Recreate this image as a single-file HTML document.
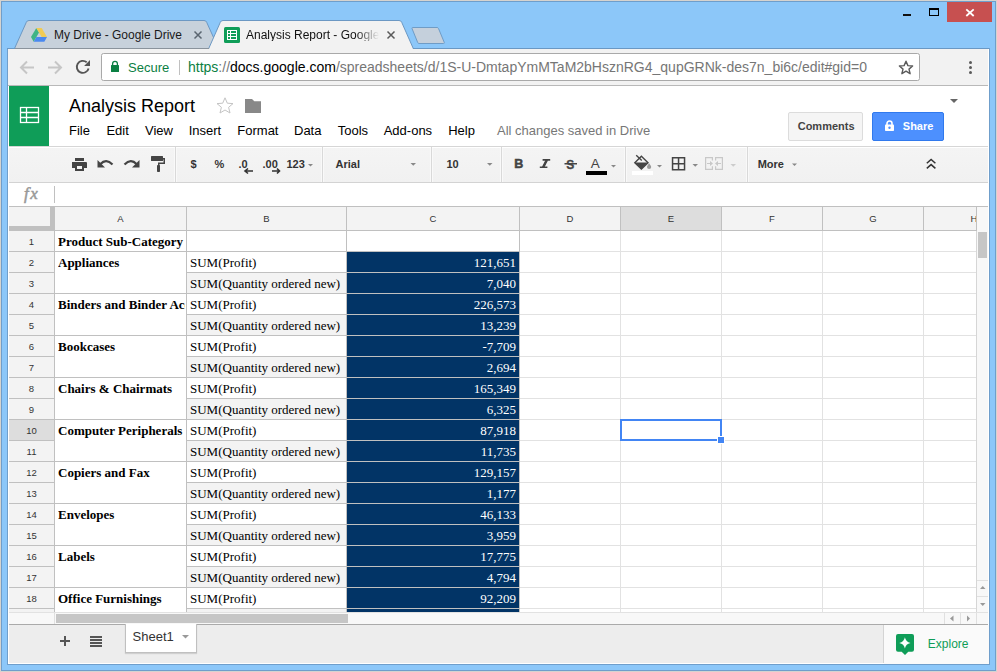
<!DOCTYPE html>
<html><head><meta charset="utf-8">
<style>
*{box-sizing:border-box;margin:0;padding:0}
html,body{width:997px;height:672px;overflow:hidden;background:#8cc7f9;font-family:"Liberation Sans",sans-serif;position:relative}
.a{position:absolute}
.t{position:absolute;white-space:pre}
</style></head><body>
<div class="a" style="left:0px;top:0px;width:997px;height:672px;background:#d6d3cf"></div>
<div class="a" style="left:1px;top:1px;width:995px;height:670px;background:#6f9ecb"></div>
<div class="a" style="left:2px;top:2px;width:993px;height:668px;background:#8cc7f9"></div>
<div class="a" style="left:7px;top:48px;width:983px;height:617px;background:#6f9ecb"></div>
<div class="a" style="left:8px;top:48px;width:981px;height:616px;background:#fff"></div>
<div class="a" style="left:947px;top:2px;width:45px;height:20px;background:#c75050"></div>
<svg class="a" style="left:947px;top:2px" width="45" height="20"><path d="M19.3,7.3 L26.7,14 M26.7,7.3 L19.3,14" stroke="#fff" stroke-width="1.8"/></svg>
<div class="a" style="left:903px;top:14px;width:8px;height:2px;background:#111"></div>
<div class="a" style="left:929px;top:8px;width:10px;height:8px;border:1px solid #000;border-top-width:2px"></div>
<svg class="a" style="left:0;top:0" width="997" height="50">
  <path d="M14.5,48.5 L26.3,22.3 Q27,20.5 29,20.5 L204,20.5 Q206,20.5 206.7,22.3 L218.5,48.5 Z" fill="#c7d1db" stroke="#6c98c3" stroke-width="1"/>
  <path d="M208.5,49 L220.3,22.3 Q221,20.5 223,20.5 L399,20.5 Q401,20.5 401.7,22.3 L413.5,49 Z" fill="#f2f2f2"/>
  <path d="M208.5,49 L220.3,22.3 Q221,20.5 223,20.5 L399,20.5 Q401,20.5 401.7,22.3 L413.5,49" fill="none" stroke="#6c98c3" stroke-width="1"/>
  <path d="M413,27.5 L437,27.5 Q438,27.5 438.5,28.5 L444.3,42.5 Q444.5,43.5 443.5,43.5 L419,43.5 Q418,43.5 417.7,42.5 L412,28.5 Q411.8,27.5 413,27.5 Z" fill="#c5d0dc" stroke="#6f9cc6" stroke-width="1"/>
  <path d="M31,37 L36.3,28 L41.7,28 L47,37 L44.3,42 L33.7,42 Z" fill="none"/>
  <path d="M36.3,28 L31,37 L33.7,41.8 L39,32.6 Z" fill="#40b486"/>
  <path d="M36.3,28 L41.7,28 L47,37 L41.7,37 Z" fill="#f1cb55"/>
  <path d="M33.7,41.8 L44.3,41.8 L47,37 L36.4,37 Z" fill="#4a89f0"/>
  <rect x="224" y="27" width="16" height="16" rx="1.5" fill="#0f9d58"/>
  <rect x="227" y="30" width="10" height="10" fill="#fff"/>
  <rect x="228" y="31" width="2" height="2" fill="#0f9d58"/><rect x="231" y="31" width="5" height="2" fill="#0f9d58"/>
  <rect x="228" y="34" width="2" height="2" fill="#0f9d58"/><rect x="231" y="34" width="5" height="2" fill="#0f9d58"/>
  <rect x="228" y="37" width="2" height="2" fill="#0f9d58"/><rect x="231" y="37" width="5" height="2" fill="#0f9d58"/>
  <path d="M194.5,31.5 L201.5,38.5 M201.5,31.5 L194.5,38.5" stroke="#5a6570" stroke-width="1.5"/>
  <path d="M387.5,31.5 L394.5,38.5 M394.5,31.5 L387.5,38.5" stroke="#5a5a5a" stroke-width="1.5"/>
</svg>
<div class="t" style="left:54px;top:28.84px;font-size:12px;line-height:12px;color:#1a1a1a">My Drive - Google Drive</div>
<div class="t" style="left:246px;top:28.84px;font-size:12px;line-height:12px;color:#111;width:135px;overflow:hidden;-webkit-mask-image:linear-gradient(90deg,#000 110px,transparent 133px)">Analysis Report - Google</div>
<div class="a" style="left:8px;top:49px;width:980px;height:36px;background:#f2f2f2"></div>
<div class="a" style="left:7px;top:48px;width:8px;height:1px;background:#6a98c4"></div>
<div class="a" style="left:15px;top:48px;width:194px;height:1px;background:#8a939c"></div>
<div class="a" style="left:413px;top:48px;width:576px;height:1px;background:#6a98c4"></div>
<div class="a" style="left:8px;top:85px;width:980px;height:1px;background:#b9b9b9"></div>
<svg class="a" style="left:0;top:48px" width="997" height="38">
  <path d="M34,19.5 L21,19.5 M27,13.5 L21,19.5 L27,25.5" stroke="#c6c6c6" stroke-width="2" fill="none"/>
  <path d="M48,19.5 L61,19.5 M55,13.5 L61,19.5 L55,25.5" stroke="#c6c6c6" stroke-width="2" fill="none"/>
  <path d="M88.6,20.4 A6,6 0 1 1 86.7,14.3" stroke="#555" stroke-width="1.9" fill="none"/>
  <path d="M90,12 L90,17.9 L84.1,17.9 Z" fill="#555"/>
</svg>
<div class="a" style="left:101px;top:53px;width:819px;height:28px;background:#fff;border:1px solid #a9a9a9;border-radius:2.5px"></div>
<svg class="a" style="left:108px;top:58px" width="14" height="16">
  <rect x="3" y="7" width="8" height="7" rx="0.5" fill="#0b8043"/>
  <path d="M4.6,7.5 V5.8 A2.4,2.4 0 0 1 9.4,5.8 V7.5" stroke="#0b8043" stroke-width="1.3" fill="none"/>
</svg>
<div class="t" style="left:128px;top:60.99px;font-size:13px;line-height:13px;color:#0b8043">Secure</div>
<div class="a" style="left:179px;top:60px;width:1px;height:15px;background:#c0c0c0"></div>
<div class="t" style="left:188px;top:60.15px;font-size:14px;line-height:14px;"><span style="color:#0b8043">https</span><span style="color:#767676">://</span><span style="color:#000">docs.google.com</span><span style="color:#767676">/spreadsheets/d/1S-U-DmtapYmMTaM2bHsznRG4_qupGRNk-des7n_bi6c/edit#gid=0</span></div>
<svg class="a" style="left:897px;top:59px" width="18" height="17">
  <path d="M9,2.2 L10.9,6.6 L15.6,7 L12,10.1 L13.1,14.7 L9,12.2 L4.9,14.7 L6,10.1 L2.4,7 L7.1,6.6 Z" fill="none" stroke="#5a5a5a" stroke-width="1.4" stroke-linejoin="round"/>
</svg>
<div class="a" style="left:969px;top:61px;width:3px;height:3px;background:#5a5a5a;border-radius:50%"></div>
<div class="a" style="left:969px;top:66px;width:3px;height:3px;background:#5a5a5a;border-radius:50%"></div>
<div class="a" style="left:969px;top:71px;width:3px;height:3px;background:#5a5a5a;border-radius:50%"></div>
<div class="a" style="left:9px;top:86px;width:40px;height:60px;background:#0f9d58"></div>
<svg class="a" style="left:19px;top:106px" width="21" height="18">
  <rect x="1.5" y="1.5" width="18" height="15" fill="none" stroke="#fff" stroke-width="1.3"/>
  <path d="M1.5,6.5 H19.5 M1.5,11.5 H19.5 M7.5,1.5 V16.5" stroke="#fff" stroke-width="1.3"/>
</svg>
<div class="t" style="left:69px;top:96.76px;font-size:18px;line-height:18px;color:#000">Analysis Report</div>
<svg class="a" style="left:215px;top:96px" width="20" height="18">
  <path d="M10,1.8 L12.3,7.2 L18,7.6 L13.6,11.3 L15,17 L10,14 L5,17 L6.4,11.3 L2,7.6 L7.7,7.2 Z" fill="none" stroke="#c4c4c4" stroke-width="1"/>
</svg>
<svg class="a" style="left:245px;top:99px" width="17" height="14">
  <path d="M0,0 H7 L9.3,2.3 H16 V14 H0 Z" fill="#888"/>
</svg>
<div class="t" style="left:69px;top:123.99px;font-size:13px;line-height:13px;color:#000">File</div>
<div class="t" style="left:106.4px;top:123.99px;font-size:13px;line-height:13px;color:#000">Edit</div>
<div class="t" style="left:145px;top:123.99px;font-size:13px;line-height:13px;color:#000">View</div>
<div class="t" style="left:188.7px;top:123.99px;font-size:13px;line-height:13px;color:#000">Insert</div>
<div class="t" style="left:237.3px;top:123.99px;font-size:13px;line-height:13px;color:#000">Format</div>
<div class="t" style="left:294px;top:123.99px;font-size:13px;line-height:13px;color:#000">Data</div>
<div class="t" style="left:337.7px;top:123.99px;font-size:13px;line-height:13px;color:#000">Tools</div>
<div class="t" style="left:383.7px;top:123.99px;font-size:13px;line-height:13px;color:#000">Add-ons</div>
<div class="t" style="left:448.2px;top:123.99px;font-size:13px;line-height:13px;color:#000">Help</div>
<div class="t" style="left:497px;top:123.99px;font-size:13px;line-height:13px;color:#777">All changes saved in Drive</div>
<svg class="a" style="left:950px;top:99px" width="9" height="5"><path d="M0,0 H8 L4,4 Z" fill="#666"/></svg>
<div class="a" style="left:788px;top:112px;width:75px;height:29px;background:#f5f5f5;border:1px solid #dcdcdc;border-radius:2px"></div>
<div class="t" style="left:797.7px;top:120.69px;font-size:11px;line-height:11px;color:#444;font-weight:bold">Comments</div>
<div class="a" style="left:872px;top:112px;width:72px;height:29px;background:#4d90fe;border:1px solid #3079ed;border-radius:2px"></div>
<svg class="a" style="left:885px;top:119px" width="10" height="13">
  <rect x="0" y="5.5" width="9" height="6.5" rx="0.8" fill="#fff"/>
  <path d="M2,6 V4.5 A2.5,2.5 0 0 1 7,4.5 V6" stroke="#fff" stroke-width="1.6" fill="none"/>
  <circle cx="4.5" cy="8.8" r="1.2" fill="#4d90fe"/>
</svg>
<div class="t" style="left:902.8px;top:120.69px;font-size:11px;line-height:11px;color:#fff;font-weight:bold">Share</div>
<div class="a" style="left:9px;top:146px;width:979px;height:1px;background:#d6d6d6"></div>
<div class="a" style="left:9px;top:147px;width:979px;height:1px;background:#fff"></div>
<div class="a" style="left:9px;top:148px;width:979px;height:34px;background:linear-gradient(#f4f4f4,#f1f1f1)"></div>
<div class="a" style="left:9px;top:182px;width:979px;height:1px;background:#d3d3d3"></div>
<div class="a" style="left:174px;top:148px;width:3px;height:34px;background:#f9f9f9"></div>
<div class="a" style="left:175px;top:147px;width:1px;height:35px;background:#d9d9d9"></div>
<div class="a" style="left:321px;top:148px;width:3px;height:34px;background:#f9f9f9"></div>
<div class="a" style="left:322px;top:147px;width:1px;height:35px;background:#d9d9d9"></div>
<div class="a" style="left:430px;top:148px;width:3px;height:34px;background:#f9f9f9"></div>
<div class="a" style="left:431px;top:147px;width:1px;height:35px;background:#d9d9d9"></div>
<div class="a" style="left:500px;top:148px;width:3px;height:34px;background:#f9f9f9"></div>
<div class="a" style="left:501px;top:147px;width:1px;height:35px;background:#d9d9d9"></div>
<div class="a" style="left:624px;top:148px;width:3px;height:34px;background:#f9f9f9"></div>
<div class="a" style="left:625px;top:147px;width:1px;height:35px;background:#d9d9d9"></div>
<div class="a" style="left:746px;top:148px;width:3px;height:34px;background:#f9f9f9"></div>
<div class="a" style="left:747px;top:147px;width:1px;height:35px;background:#d9d9d9"></div>
<svg class="a" style="left:0;top:147px" width="997" height="35">
  <!-- print -->
  <g fill="#444">
    <rect x="75" y="11" width="9" height="3"/>
    <path d="M72,15 H86 Q87,15 87,16 V21 H84 V24 H75 V21 H72 Z"/>
    <rect x="77" y="19" width="5" height="3" fill="#f3f3f3"/>
  </g>
  <!-- undo -->
  <path d="M100.5,17 Q106,11 112.5,17.5" stroke="#444" stroke-width="2.2" fill="none"/>
  <path d="M97.5,13 L97.5,20.5 L105,20.5 Z" fill="#444"/>
  <!-- redo -->
  <path d="M136.5,17 Q131,11 124.5,17.5" stroke="#444" stroke-width="2.2" fill="none"/>
  <path d="M139.5,13 L139.5,20.5 L132,20.5 Z" fill="#444"/>
  <!-- paint format -->
  <g fill="#444">
    <rect x="151" y="9" width="12" height="5" rx="0.5"/>
    <path d="M163,11 H165 V17 H159.5 V19 H158 V15.5 H163.5 V12.5 H163 Z"/>
    <rect x="157" y="18" width="3" height="7" rx="0.8"/>
  </g>
</svg>
<div class="t" style="left:190.5px;top:158.69px;font-size:11px;line-height:11px;color:#333;font-weight:bold">$</div>
<div class="t" style="left:214.5px;top:158.69px;font-size:11px;line-height:11px;color:#333;font-weight:bold">%</div>
<div class="t" style="left:238.5px;top:158.69px;font-size:11px;line-height:11px;color:#333;font-weight:bold">.0</div>
<div class="t" style="left:262.5px;top:158.69px;font-size:11px;line-height:11px;color:#333;font-weight:bold">.00</div>
<div class="t" style="left:286.5px;top:158.69px;font-size:11px;line-height:11px;color:#333;font-weight:bold">123</div>
<div class="t" style="left:335.6px;top:158.69px;font-size:11px;line-height:11px;color:#333;font-weight:bold">Arial</div>
<div class="t" style="left:446.4px;top:158.69px;font-size:11px;line-height:11px;color:#333;font-weight:bold">10</div>
<div class="t" style="left:757.7px;top:158.69px;font-size:11px;line-height:11px;color:#333;font-weight:bold">More</div>
<svg class="a" style="left:0;top:147px" width="997" height="35">
  <path d="M245,24 H253 M248,21.5 L245,24 L248,26.5" stroke="#333" stroke-width="1.6" fill="none"/>
  <path d="M272,24 H279.5 M277,21.5 L279.5,24 L277,26.5" stroke="#333" stroke-width="1.6" fill="none"/>
  <g fill="#888">
    <path d="M308,17 h5 l-2.5,2.5 z"/>
    <path d="M410.5,16 h5.5 l-2.75,2.75 z"/>
    <path d="M487,16 h5.5 l-2.75,2.75 z"/>
    <path d="M611,18 h5 l-2.5,2.5 z"/>
    <path d="M657,18 h5 l-2.5,2.5 z"/>
    <path d="M692.5,17 h5.5 l-2.75,2.75 z"/>
    <path d="M792,16.5 h5 l-2.5,2.5 z"/>
  </g>
  <path d="M730.5,17 h5.5 l-2.75,2.75 z" fill="#ccc"/>
  <!-- B -->
  <text x="514.3" y="21" font-family="Liberation Sans" font-weight="bold" font-size="12.5" fill="#444" stroke="#444" stroke-width="0.5">B</text>
  <!-- I -->
  <path d="M542.6,12.9 H550.2 M539.8,20.3 H547.4 M546.9,12.9 L543.1,20.3" stroke="#444" stroke-width="1.6" fill="none"/>
  <path d="M546.9,12.9 L543.1,20.3" stroke="#444" stroke-width="2.4" fill="none"/>
  <!-- S strike -->
  <text x="566.3" y="21.8" font-family="Liberation Sans" font-weight="bold" font-size="12" fill="#444" stroke="#444" stroke-width="0.3">S</text>
  <rect x="564.5" y="16" width="12.5" height="1.5" fill="#444"/>
  <!-- A text color -->
  <text x="590.8" y="21" font-family="Liberation Sans" font-size="13.5" fill="#444">A</text>
  <rect x="586" y="24" width="21" height="4" fill="#000"/>
  <!-- fill -->
  <path d="M634.8,15.8 L641.4,9.2 L648,15.8 L641.4,22 Z" fill="none" stroke="#444" stroke-width="1.4" stroke-linejoin="miter"/>
  <path d="M634.8,15.6 L648,15.6 L641.4,22 Z" fill="#444"/>
  <path d="M636.2,8.3 L641.8,13.5" stroke="#444" stroke-width="1.4"/>
  <path d="M649.1,16.2 Q651.2,19 651.2,20 A2.1,2.1 0 0 1 647,20 Q647,19 649.1,16.2 Z" fill="#999"/>
  <rect x="632" y="24" width="21" height="4" fill="#fff"/>
  <!-- borders -->
  <g transform="translate(669.55,7.75) scale(0.75)"><path d="M3 3v18h18V3H3zm8 16H5v-6h6v6zm0-8H5V5h6v6zm8 8h-6v-6h6v6zm0-8h-6V5h6v6z" fill="#444"/></g>
  <!-- merge disabled -->
  <g stroke="#c8c8c8" stroke-width="1.2" fill="none">
    <path d="M712.4,13.6 V10.6 H705.6 V22.4 H712.4 V19.2"/>
    <path d="M715.6,13.6 V10.6 H722.4 V22.4 H715.6 V19.2"/>
    <path d="M707,16.5 H710.5 M721,16.5 H717.5"/>
  </g>
  <path d="M710,14 L713,16.5 L710,19 Z M718,14 L715,16.5 L718,19 Z" fill="#c8c8c8"/>
  <!-- collapse -->
  <path d="M926.8,16.2 L931.1,12.4 L935.4,16.2 M926.8,21.4 L931.1,17.6 L935.4,21.4" stroke="#333" stroke-width="1.5" fill="none"/>
</svg>
<div class="t" style="left:24px;top:184.76px;font-size:17px;line-height:17px;font-family:'Liberation Serif',serif;color:#999;font-style:italic;-webkit-text-stroke:0.5px #999;letter-spacing:1.5px">f<span style="letter-spacing:0">x</span></div>
<div class="a" style="left:54px;top:186px;width:1px;height:17px;background:#c0c0c0"></div>
<div class="a" style="left:9px;top:206px;width:979px;height:1px;background:#c0c0c0"></div>
<div class="a" style="left:9px;top:207px;width:968px;height:23px;background:#f3f3f3"></div>
<div class="a" style="left:621px;top:207px;width:100px;height:23px;background:#dddddd"></div>
<div class="a" style="left:9px;top:230px;width:968px;height:1px;background:#c0c0c0"></div>
<div class="a" style="left:977px;top:230px;width:11px;height:1px;background:#dcdcdc"></div>
<div class="a" style="left:9px;top:231px;width:45px;height:381px;background:#f3f3f3"></div>
<div class="a" style="left:9px;top:420px;width:45px;height:20px;background:#dddddd"></div>
<div class="a" style="left:50px;top:207px;width:4px;height:24px;background:#c0c0c0"></div>
<div class="a" style="left:9px;top:226px;width:45px;height:4px;background:#c0c0c0"></div>
<div class="a" style="left:977px;top:207px;width:11px;height:406px;background:#f8f8f8"></div>
<div class="a" style="left:520px;top:251px;width:457px;height:1px;background:#e2e2e2"></div>
<div class="a" style="left:520px;top:272px;width:457px;height:1px;background:#e2e2e2"></div>
<div class="a" style="left:520px;top:293px;width:457px;height:1px;background:#e2e2e2"></div>
<div class="a" style="left:520px;top:314px;width:457px;height:1px;background:#e2e2e2"></div>
<div class="a" style="left:520px;top:335px;width:457px;height:1px;background:#e2e2e2"></div>
<div class="a" style="left:520px;top:356px;width:457px;height:1px;background:#e2e2e2"></div>
<div class="a" style="left:520px;top:377px;width:457px;height:1px;background:#e2e2e2"></div>
<div class="a" style="left:520px;top:398px;width:457px;height:1px;background:#e2e2e2"></div>
<div class="a" style="left:520px;top:419px;width:457px;height:1px;background:#e2e2e2"></div>
<div class="a" style="left:520px;top:440px;width:457px;height:1px;background:#e2e2e2"></div>
<div class="a" style="left:520px;top:461px;width:457px;height:1px;background:#e2e2e2"></div>
<div class="a" style="left:520px;top:482px;width:457px;height:1px;background:#e2e2e2"></div>
<div class="a" style="left:520px;top:503px;width:457px;height:1px;background:#e2e2e2"></div>
<div class="a" style="left:520px;top:524px;width:457px;height:1px;background:#e2e2e2"></div>
<div class="a" style="left:520px;top:545px;width:457px;height:1px;background:#e2e2e2"></div>
<div class="a" style="left:520px;top:566px;width:457px;height:1px;background:#e2e2e2"></div>
<div class="a" style="left:520px;top:587px;width:457px;height:1px;background:#e2e2e2"></div>
<div class="a" style="left:520px;top:608px;width:457px;height:1px;background:#e2e2e2"></div>
<div class="a" style="left:186px;top:231px;width:1px;height:381px;background:#e2e2e2"></div>
<div class="a" style="left:346px;top:231px;width:1px;height:381px;background:#e2e2e2"></div>
<div class="a" style="left:519px;top:231px;width:1px;height:381px;background:#e2e2e2"></div>
<div class="a" style="left:620px;top:231px;width:1px;height:381px;background:#e2e2e2"></div>
<div class="a" style="left:721px;top:231px;width:1px;height:381px;background:#e2e2e2"></div>
<div class="a" style="left:822px;top:231px;width:1px;height:381px;background:#e2e2e2"></div>
<div class="a" style="left:923px;top:231px;width:1px;height:381px;background:#e2e2e2"></div>
<div class="a" style="left:54px;top:206px;width:1px;height:406px;background:#c0c0c0"></div>
<div class="a" style="left:976px;top:207px;width:1px;height:24px;background:#c0c0c0"></div>
<div class="a" style="left:976px;top:231px;width:1px;height:382px;background:#d6d6d6"></div>
<div class="a" style="left:186px;top:207px;width:1px;height:23px;background:#c0c0c0"></div>
<div class="a" style="left:346px;top:207px;width:1px;height:23px;background:#c0c0c0"></div>
<div class="a" style="left:519px;top:207px;width:1px;height:23px;background:#c0c0c0"></div>
<div class="a" style="left:620px;top:207px;width:1px;height:23px;background:#c0c0c0"></div>
<div class="a" style="left:721px;top:207px;width:1px;height:23px;background:#c0c0c0"></div>
<div class="a" style="left:822px;top:207px;width:1px;height:23px;background:#c0c0c0"></div>
<div class="a" style="left:923px;top:207px;width:1px;height:23px;background:#c0c0c0"></div>
<div class="t" style="left:20.5px;width:200px;text-align:center;top:213.96px;font-size:9.5px;line-height:9.5px;color:#333">A</div>
<div class="t" style="left:166.5px;width:200px;text-align:center;top:213.96px;font-size:9.5px;line-height:9.5px;color:#333">B</div>
<div class="t" style="left:333.0px;width:200px;text-align:center;top:213.96px;font-size:9.5px;line-height:9.5px;color:#333">C</div>
<div class="t" style="left:470.0px;width:200px;text-align:center;top:213.96px;font-size:9.5px;line-height:9.5px;color:#333">D</div>
<div class="t" style="left:571.0px;width:200px;text-align:center;top:213.96px;font-size:9.5px;line-height:9.5px;color:#333">E</div>
<div class="t" style="left:672.0px;width:200px;text-align:center;top:213.96px;font-size:9.5px;line-height:9.5px;color:#333">F</div>
<div class="t" style="left:773.0px;width:200px;text-align:center;top:213.96px;font-size:9.5px;line-height:9.5px;color:#333">G</div>
<div class="a" style="left:924px;top:207px;width:52px;height:23px;overflow:hidden">
<div class="t" style="left:-50px;width:200px;text-align:center;top:6.96px;font-size:9.5px;line-height:9.5px;color:#333">H</div>
</div>
<div class="a" style="left:9px;top:251px;width:45px;height:1px;background:#c0c0c0"></div>
<div class="t" style="left:-68.5px;width:200px;text-align:center;top:237.36px;font-size:9.5px;line-height:9.5px;color:#333">1</div>
<div class="a" style="left:9px;top:272px;width:45px;height:1px;background:#c0c0c0"></div>
<div class="t" style="left:-68.5px;width:200px;text-align:center;top:258.36px;font-size:9.5px;line-height:9.5px;color:#333">2</div>
<div class="a" style="left:9px;top:293px;width:45px;height:1px;background:#c0c0c0"></div>
<div class="t" style="left:-68.5px;width:200px;text-align:center;top:279.36px;font-size:9.5px;line-height:9.5px;color:#333">3</div>
<div class="a" style="left:9px;top:314px;width:45px;height:1px;background:#c0c0c0"></div>
<div class="t" style="left:-68.5px;width:200px;text-align:center;top:300.36px;font-size:9.5px;line-height:9.5px;color:#333">4</div>
<div class="a" style="left:9px;top:335px;width:45px;height:1px;background:#c0c0c0"></div>
<div class="t" style="left:-68.5px;width:200px;text-align:center;top:321.36px;font-size:9.5px;line-height:9.5px;color:#333">5</div>
<div class="a" style="left:9px;top:356px;width:45px;height:1px;background:#c0c0c0"></div>
<div class="t" style="left:-68.5px;width:200px;text-align:center;top:342.36px;font-size:9.5px;line-height:9.5px;color:#333">6</div>
<div class="a" style="left:9px;top:377px;width:45px;height:1px;background:#c0c0c0"></div>
<div class="t" style="left:-68.5px;width:200px;text-align:center;top:363.36px;font-size:9.5px;line-height:9.5px;color:#333">7</div>
<div class="a" style="left:9px;top:398px;width:45px;height:1px;background:#c0c0c0"></div>
<div class="t" style="left:-68.5px;width:200px;text-align:center;top:384.36px;font-size:9.5px;line-height:9.5px;color:#333">8</div>
<div class="a" style="left:9px;top:419px;width:45px;height:1px;background:#c0c0c0"></div>
<div class="t" style="left:-68.5px;width:200px;text-align:center;top:405.36px;font-size:9.5px;line-height:9.5px;color:#333">9</div>
<div class="a" style="left:9px;top:440px;width:45px;height:1px;background:#c0c0c0"></div>
<div class="t" style="left:-68.5px;width:200px;text-align:center;top:426.36px;font-size:9.5px;line-height:9.5px;color:#333">10</div>
<div class="a" style="left:9px;top:461px;width:45px;height:1px;background:#c0c0c0"></div>
<div class="t" style="left:-68.5px;width:200px;text-align:center;top:447.36px;font-size:9.5px;line-height:9.5px;color:#333">11</div>
<div class="a" style="left:9px;top:482px;width:45px;height:1px;background:#c0c0c0"></div>
<div class="t" style="left:-68.5px;width:200px;text-align:center;top:468.36px;font-size:9.5px;line-height:9.5px;color:#333">12</div>
<div class="a" style="left:9px;top:503px;width:45px;height:1px;background:#c0c0c0"></div>
<div class="t" style="left:-68.5px;width:200px;text-align:center;top:489.36px;font-size:9.5px;line-height:9.5px;color:#333">13</div>
<div class="a" style="left:9px;top:524px;width:45px;height:1px;background:#c0c0c0"></div>
<div class="t" style="left:-68.5px;width:200px;text-align:center;top:510.36px;font-size:9.5px;line-height:9.5px;color:#333">14</div>
<div class="a" style="left:9px;top:545px;width:45px;height:1px;background:#c0c0c0"></div>
<div class="t" style="left:-68.5px;width:200px;text-align:center;top:531.36px;font-size:9.5px;line-height:9.5px;color:#333">15</div>
<div class="a" style="left:9px;top:566px;width:45px;height:1px;background:#c0c0c0"></div>
<div class="t" style="left:-68.5px;width:200px;text-align:center;top:552.36px;font-size:9.5px;line-height:9.5px;color:#333">16</div>
<div class="a" style="left:9px;top:587px;width:45px;height:1px;background:#c0c0c0"></div>
<div class="t" style="left:-68.5px;width:200px;text-align:center;top:573.36px;font-size:9.5px;line-height:9.5px;color:#333">17</div>
<div class="a" style="left:9px;top:608px;width:45px;height:1px;background:#c0c0c0"></div>
<div class="t" style="left:-68.5px;width:200px;text-align:center;top:594.36px;font-size:9.5px;line-height:9.5px;color:#333">18</div>
<div class="a" style="left:347px;top:252px;width:172px;height:20px;background:#023466"></div>
<div class="a" style="left:347px;top:273px;width:172px;height:20px;background:#023466"></div>
<div class="a" style="left:187px;top:273px;width:159px;height:20px;background:#f3f3f3"></div>
<div class="a" style="left:347px;top:294px;width:172px;height:20px;background:#023466"></div>
<div class="a" style="left:347px;top:315px;width:172px;height:20px;background:#023466"></div>
<div class="a" style="left:187px;top:315px;width:159px;height:20px;background:#f3f3f3"></div>
<div class="a" style="left:347px;top:336px;width:172px;height:20px;background:#023466"></div>
<div class="a" style="left:347px;top:357px;width:172px;height:20px;background:#023466"></div>
<div class="a" style="left:187px;top:357px;width:159px;height:20px;background:#f3f3f3"></div>
<div class="a" style="left:347px;top:378px;width:172px;height:20px;background:#023466"></div>
<div class="a" style="left:347px;top:399px;width:172px;height:20px;background:#023466"></div>
<div class="a" style="left:187px;top:399px;width:159px;height:20px;background:#f3f3f3"></div>
<div class="a" style="left:347px;top:420px;width:172px;height:20px;background:#023466"></div>
<div class="a" style="left:347px;top:441px;width:172px;height:20px;background:#023466"></div>
<div class="a" style="left:187px;top:441px;width:159px;height:20px;background:#f3f3f3"></div>
<div class="a" style="left:347px;top:462px;width:172px;height:20px;background:#023466"></div>
<div class="a" style="left:347px;top:483px;width:172px;height:20px;background:#023466"></div>
<div class="a" style="left:187px;top:483px;width:159px;height:20px;background:#f3f3f3"></div>
<div class="a" style="left:347px;top:504px;width:172px;height:20px;background:#023466"></div>
<div class="a" style="left:347px;top:525px;width:172px;height:20px;background:#023466"></div>
<div class="a" style="left:187px;top:525px;width:159px;height:20px;background:#f3f3f3"></div>
<div class="a" style="left:347px;top:546px;width:172px;height:20px;background:#023466"></div>
<div class="a" style="left:347px;top:567px;width:172px;height:20px;background:#023466"></div>
<div class="a" style="left:187px;top:567px;width:159px;height:20px;background:#f3f3f3"></div>
<div class="a" style="left:347px;top:588px;width:172px;height:20px;background:#023466"></div>
<div class="a" style="left:347px;top:609px;width:172px;height:3px;background:#023466"></div>
<div class="a" style="left:187px;top:609px;width:159px;height:3px;background:#f3f3f3"></div>
<div class="a" style="left:186px;top:251px;width:334px;height:1px;background:#c0c0c0"></div>
<div class="a" style="left:54px;top:251px;width:133px;height:1px;background:#c0c0c0"></div>
<div class="a" style="left:186px;top:272px;width:334px;height:1px;background:#c0c0c0"></div>
<div class="a" style="left:186px;top:293px;width:334px;height:1px;background:#c0c0c0"></div>
<div class="a" style="left:54px;top:293px;width:133px;height:1px;background:#c0c0c0"></div>
<div class="a" style="left:186px;top:314px;width:334px;height:1px;background:#c0c0c0"></div>
<div class="a" style="left:186px;top:335px;width:334px;height:1px;background:#c0c0c0"></div>
<div class="a" style="left:54px;top:335px;width:133px;height:1px;background:#c0c0c0"></div>
<div class="a" style="left:186px;top:356px;width:334px;height:1px;background:#c0c0c0"></div>
<div class="a" style="left:186px;top:377px;width:334px;height:1px;background:#c0c0c0"></div>
<div class="a" style="left:54px;top:377px;width:133px;height:1px;background:#c0c0c0"></div>
<div class="a" style="left:186px;top:398px;width:334px;height:1px;background:#c0c0c0"></div>
<div class="a" style="left:186px;top:419px;width:334px;height:1px;background:#c0c0c0"></div>
<div class="a" style="left:54px;top:419px;width:133px;height:1px;background:#c0c0c0"></div>
<div class="a" style="left:186px;top:440px;width:334px;height:1px;background:#c0c0c0"></div>
<div class="a" style="left:186px;top:461px;width:334px;height:1px;background:#c0c0c0"></div>
<div class="a" style="left:54px;top:461px;width:133px;height:1px;background:#c0c0c0"></div>
<div class="a" style="left:186px;top:482px;width:334px;height:1px;background:#c0c0c0"></div>
<div class="a" style="left:186px;top:503px;width:334px;height:1px;background:#c0c0c0"></div>
<div class="a" style="left:54px;top:503px;width:133px;height:1px;background:#c0c0c0"></div>
<div class="a" style="left:186px;top:524px;width:334px;height:1px;background:#c0c0c0"></div>
<div class="a" style="left:186px;top:545px;width:334px;height:1px;background:#c0c0c0"></div>
<div class="a" style="left:54px;top:545px;width:133px;height:1px;background:#c0c0c0"></div>
<div class="a" style="left:186px;top:566px;width:334px;height:1px;background:#c0c0c0"></div>
<div class="a" style="left:186px;top:587px;width:334px;height:1px;background:#c0c0c0"></div>
<div class="a" style="left:54px;top:587px;width:133px;height:1px;background:#c0c0c0"></div>
<div class="a" style="left:186px;top:608px;width:334px;height:1px;background:#c0c0c0"></div>
<div class="a" style="left:186px;top:231px;width:1px;height:381px;background:#c0c0c0"></div>
<div class="a" style="left:346px;top:231px;width:1px;height:381px;background:#c0c0c0"></div>
<div class="a" style="left:519px;top:231px;width:1px;height:381px;background:#c0c0c0"></div>
<div class="t" style="left:58px;width:127px;overflow:hidden;padding:4px 0 6px;top:231.11px;font-size:13px;line-height:13px;font-family:'Liberation Serif',serif;color:#000;font-weight:bold;white-space:nowrap">Product Sub-Category</div>
<div class="t" style="left:58px;width:127px;overflow:hidden;padding:4px 0 6px;top:252.11px;font-size:13px;line-height:13px;font-family:'Liberation Serif',serif;color:#000;font-weight:bold;white-space:nowrap">Appliances</div>
<div class="t" style="left:190px;top:256.11px;font-size:13px;line-height:13px;font-family:'Liberation Serif',serif;color:#000;white-space:nowrap">SUM(Profit)</div>
<div class="t" style="right:481px;text-align:right;top:256.11px;font-size:13px;line-height:13px;font-family:'Liberation Serif',serif;color:#fff">121,651</div>
<div class="t" style="left:190px;top:277.11px;font-size:13px;line-height:13px;font-family:'Liberation Serif',serif;color:#000;white-space:nowrap">SUM(Quantity ordered new)</div>
<div class="t" style="right:481px;text-align:right;top:277.11px;font-size:13px;line-height:13px;font-family:'Liberation Serif',serif;color:#fff">7,040</div>
<div class="t" style="left:58px;width:127px;overflow:hidden;padding:4px 0 6px;top:294.11px;font-size:13px;line-height:13px;font-family:'Liberation Serif',serif;color:#000;font-weight:bold;white-space:nowrap">Binders and Binder Accessories</div>
<div class="t" style="left:190px;top:298.11px;font-size:13px;line-height:13px;font-family:'Liberation Serif',serif;color:#000;white-space:nowrap">SUM(Profit)</div>
<div class="t" style="right:481px;text-align:right;top:298.11px;font-size:13px;line-height:13px;font-family:'Liberation Serif',serif;color:#fff">226,573</div>
<div class="t" style="left:190px;top:319.11px;font-size:13px;line-height:13px;font-family:'Liberation Serif',serif;color:#000;white-space:nowrap">SUM(Quantity ordered new)</div>
<div class="t" style="right:481px;text-align:right;top:319.11px;font-size:13px;line-height:13px;font-family:'Liberation Serif',serif;color:#fff">13,239</div>
<div class="t" style="left:58px;width:127px;overflow:hidden;padding:4px 0 6px;top:336.11px;font-size:13px;line-height:13px;font-family:'Liberation Serif',serif;color:#000;font-weight:bold;white-space:nowrap">Bookcases</div>
<div class="t" style="left:190px;top:340.11px;font-size:13px;line-height:13px;font-family:'Liberation Serif',serif;color:#000;white-space:nowrap">SUM(Profit)</div>
<div class="t" style="right:481px;text-align:right;top:340.11px;font-size:13px;line-height:13px;font-family:'Liberation Serif',serif;color:#fff">-7,709</div>
<div class="t" style="left:190px;top:361.11px;font-size:13px;line-height:13px;font-family:'Liberation Serif',serif;color:#000;white-space:nowrap">SUM(Quantity ordered new)</div>
<div class="t" style="right:481px;text-align:right;top:361.11px;font-size:13px;line-height:13px;font-family:'Liberation Serif',serif;color:#fff">2,694</div>
<div class="t" style="left:58px;width:127px;overflow:hidden;padding:4px 0 6px;top:378.11px;font-size:13px;line-height:13px;font-family:'Liberation Serif',serif;color:#000;font-weight:bold;white-space:nowrap">Chairs &amp; Chairmats</div>
<div class="t" style="left:190px;top:382.11px;font-size:13px;line-height:13px;font-family:'Liberation Serif',serif;color:#000;white-space:nowrap">SUM(Profit)</div>
<div class="t" style="right:481px;text-align:right;top:382.11px;font-size:13px;line-height:13px;font-family:'Liberation Serif',serif;color:#fff">165,349</div>
<div class="t" style="left:190px;top:403.11px;font-size:13px;line-height:13px;font-family:'Liberation Serif',serif;color:#000;white-space:nowrap">SUM(Quantity ordered new)</div>
<div class="t" style="right:481px;text-align:right;top:403.11px;font-size:13px;line-height:13px;font-family:'Liberation Serif',serif;color:#fff">6,325</div>
<div class="t" style="left:58px;width:127px;overflow:hidden;padding:4px 0 6px;top:420.11px;font-size:13px;line-height:13px;font-family:'Liberation Serif',serif;color:#000;font-weight:bold;white-space:nowrap">Computer Peripherals</div>
<div class="t" style="left:190px;top:424.11px;font-size:13px;line-height:13px;font-family:'Liberation Serif',serif;color:#000;white-space:nowrap">SUM(Profit)</div>
<div class="t" style="right:481px;text-align:right;top:424.11px;font-size:13px;line-height:13px;font-family:'Liberation Serif',serif;color:#fff">87,918</div>
<div class="t" style="left:190px;top:445.11px;font-size:13px;line-height:13px;font-family:'Liberation Serif',serif;color:#000;white-space:nowrap">SUM(Quantity ordered new)</div>
<div class="t" style="right:481px;text-align:right;top:445.11px;font-size:13px;line-height:13px;font-family:'Liberation Serif',serif;color:#fff">11,735</div>
<div class="t" style="left:58px;width:127px;overflow:hidden;padding:4px 0 6px;top:462.11px;font-size:13px;line-height:13px;font-family:'Liberation Serif',serif;color:#000;font-weight:bold;white-space:nowrap">Copiers and Fax</div>
<div class="t" style="left:190px;top:466.11px;font-size:13px;line-height:13px;font-family:'Liberation Serif',serif;color:#000;white-space:nowrap">SUM(Profit)</div>
<div class="t" style="right:481px;text-align:right;top:466.11px;font-size:13px;line-height:13px;font-family:'Liberation Serif',serif;color:#fff">129,157</div>
<div class="t" style="left:190px;top:487.11px;font-size:13px;line-height:13px;font-family:'Liberation Serif',serif;color:#000;white-space:nowrap">SUM(Quantity ordered new)</div>
<div class="t" style="right:481px;text-align:right;top:487.11px;font-size:13px;line-height:13px;font-family:'Liberation Serif',serif;color:#fff">1,177</div>
<div class="t" style="left:58px;width:127px;overflow:hidden;padding:4px 0 6px;top:504.11px;font-size:13px;line-height:13px;font-family:'Liberation Serif',serif;color:#000;font-weight:bold;white-space:nowrap">Envelopes</div>
<div class="t" style="left:190px;top:508.11px;font-size:13px;line-height:13px;font-family:'Liberation Serif',serif;color:#000;white-space:nowrap">SUM(Profit)</div>
<div class="t" style="right:481px;text-align:right;top:508.11px;font-size:13px;line-height:13px;font-family:'Liberation Serif',serif;color:#fff">46,133</div>
<div class="t" style="left:190px;top:529.11px;font-size:13px;line-height:13px;font-family:'Liberation Serif',serif;color:#000;white-space:nowrap">SUM(Quantity ordered new)</div>
<div class="t" style="right:481px;text-align:right;top:529.11px;font-size:13px;line-height:13px;font-family:'Liberation Serif',serif;color:#fff">3,959</div>
<div class="t" style="left:58px;width:127px;overflow:hidden;padding:4px 0 6px;top:546.11px;font-size:13px;line-height:13px;font-family:'Liberation Serif',serif;color:#000;font-weight:bold;white-space:nowrap">Labels</div>
<div class="t" style="left:190px;top:550.11px;font-size:13px;line-height:13px;font-family:'Liberation Serif',serif;color:#000;white-space:nowrap">SUM(Profit)</div>
<div class="t" style="right:481px;text-align:right;top:550.11px;font-size:13px;line-height:13px;font-family:'Liberation Serif',serif;color:#fff">17,775</div>
<div class="t" style="left:190px;top:571.11px;font-size:13px;line-height:13px;font-family:'Liberation Serif',serif;color:#000;white-space:nowrap">SUM(Quantity ordered new)</div>
<div class="t" style="right:481px;text-align:right;top:571.11px;font-size:13px;line-height:13px;font-family:'Liberation Serif',serif;color:#fff">4,794</div>
<div class="t" style="left:58px;width:127px;overflow:hidden;padding:4px 0 6px;top:588.11px;font-size:13px;line-height:13px;font-family:'Liberation Serif',serif;color:#000;font-weight:bold;white-space:nowrap">Office Furnishings</div>
<div class="t" style="left:190px;top:592.11px;font-size:13px;line-height:13px;font-family:'Liberation Serif',serif;color:#000;white-space:nowrap">SUM(Profit)</div>
<div class="t" style="right:481px;text-align:right;top:592.11px;font-size:13px;line-height:13px;font-family:'Liberation Serif',serif;color:#fff">92,209</div>
<div class="a" style="left:620px;top:419px;width:102px;height:22px;border:2px solid #4285f4"></div>
<div class="a" style="left:717px;top:436px;width:8px;height:8px;background:#fff"></div>
<div class="a" style="left:718px;top:437px;width:6px;height:6px;background:#4285f4"></div>
<div class="a" style="left:978px;top:232px;width:9px;height:26px;background:#c6c6c6"></div>
<div class="a" style="left:977px;top:580px;width:11px;height:1px;background:#e0e0e0"></div>
<div class="a" style="left:977px;top:596px;width:11px;height:1px;background:#e0e0e0"></div>
<svg class="a" style="left:977px;top:580px" width="11" height="32">
  <path d="M3,9 h5.5 l-2.75,-3 z" fill="#999"/>
  <path d="M3,23 h5.5 l-2.75,3 z" fill="#999"/>
</svg>
<div class="a" style="left:9px;top:612px;width:979px;height:1px;background:#e2e2e2"></div>
<div class="a" style="left:9px;top:613px;width:979px;height:11px;background:#f8f8f8"></div>
<div class="a" style="left:54px;top:613px;width:1px;height:11px;background:#e0e0e0"></div>
<div class="a" style="left:56px;top:614px;width:292px;height:9px;background:#c6c6c6"></div>
<div class="a" style="left:944px;top:613px;width:1px;height:11px;background:#e0e0e0"></div>
<div class="a" style="left:960px;top:613px;width:1px;height:11px;background:#e0e0e0"></div>
<div class="a" style="left:976px;top:613px;width:1px;height:11px;background:#e0e0e0"></div>
<svg class="a" style="left:944px;top:613px" width="33" height="11">
  <path d="M6,5.5 l3.5,-3 v6 z" fill="#999"/>
  <path d="M26,5.5 l-3,-3 v6 z" fill="#999"/>
</svg>
<div class="a" style="left:9px;top:624px;width:979px;height:1px;background:#aaaaaa"></div>
<div class="a" style="left:9px;top:625px;width:979px;height:38px;background:#ededed"></div>
<svg class="a" style="left:55px;top:630px" width="55" height="22">
  <path d="M5,11 H15 M10,6 V16" stroke="#555" stroke-width="2"/>
  <path d="M35,7 H47 M35,10 H47 M35,13 H47 M35,16 H47" stroke="#555" stroke-width="2"/>
</svg>
<div class="a" style="left:125px;top:624px;width:72px;height:29px;background:#fff;border:1px solid #c0c0c0;border-top:none;box-shadow:0 1px 1px rgba(0,0,0,.12)"></div>
<div class="t" style="left:132.6px;top:629.99px;font-size:13px;line-height:13px;color:#333">Sheet1</div>
<svg class="a" style="left:182px;top:635px" width="8" height="5"><path d="M0,0 H7 L3.5,3.5 Z" fill="#999"/></svg>
<div class="a" style="left:883px;top:625px;width:1px;height:38px;background:#d4d4d4"></div>
<div class="a" style="left:884px;top:625px;width:105px;height:39px;background:#fafafa"></div>
<svg class="a" style="left:895px;top:633px" width="21" height="23">
  <path d="M3,1 H17 Q19,1 19,3 V16.7 Q19,18.7 17,18.7 H13.3 L10,22 L6.7,18.7 H3 Q1,18.7 1,16.7 V3 Q1,1 3,1 Z" fill="#0f9d58"/>
  <path d="M9.9,4.3 Q10.8,9 15.5,9.9 Q10.8,10.8 9.9,15.5 Q9,10.8 4.3,9.9 Q9,9 9.9,4.3 Z" fill="#fff"/>
</svg>
<div class="t" style="left:927.8px;top:637.84px;font-size:12px;line-height:12px;color:#0f9d58">Explore</div>
</body></html>
